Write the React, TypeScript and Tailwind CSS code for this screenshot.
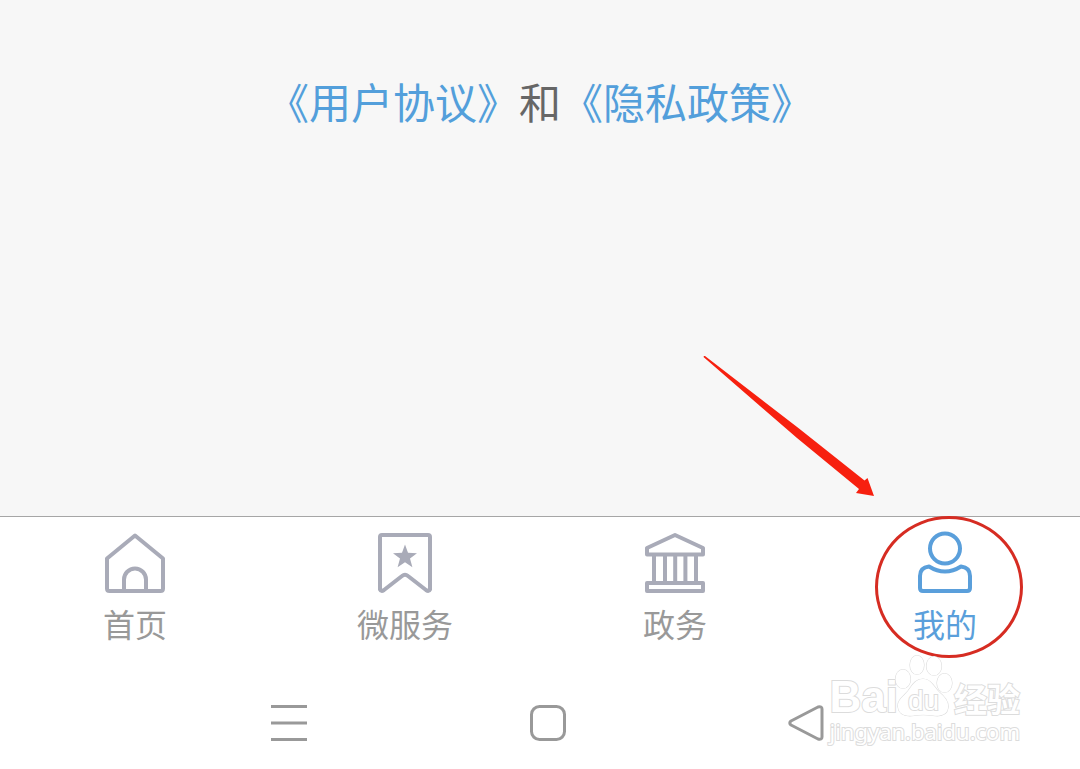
import type { ReactNode } from 'react';

const HomeIcon = () => (
  <svg className="w-15 h-15 overflow-visible" viewBox="0 0 60 60" fill="none" stroke="currentColor" strokeWidth="4" strokeLinejoin="round" aria-hidden="true">
    <path d="M30 2.5 L58 25.5 V55.5 Q58 58 55.5 58 H4.500 Q2 58 2 55.5 V25.500 Z" />
    <path d="M19 58 V46.500 A11 11 0 0 1 41 46.500 V58" />
  </svg>
);

const ServiceIcon = () => (
  <svg className="w-15 h-15 overflow-visible" viewBox="0 0 60 60" fill="none" stroke="currentColor" strokeWidth="4" strokeLinejoin="round" aria-hidden="true">
    <path d="M7 2 H53 Q55 2 55 4 V56.5 Q54 59 51 57 L33 43 Q30 40.5 27 43 L9 57 Q6 59 5 56.5 V4 Q5 2 7 2 Z" />
    <path d="M30 11.5 L33 19.8 L42 20.2 L35 25.6 L37.4 34.2 L30 29.3 L22.6 34.2 L25 25.6 L18 20.2 L27 19.8 Z" fill="currentColor" stroke="none" />
  </svg>
);

const GovIcon = () => (
  <svg className="w-15 h-15 overflow-visible" viewBox="0 0 60 60" fill="none" stroke="currentColor" strokeWidth="4" strokeLinejoin="round" aria-hidden="true">
    <path d="M30 2 L58 15 V21.5 H2 V15 Z" />
    <path d="M9 22 V49 M20 22 V49 M30.2 22 V49 M40.4 22 V49 M51 22 V49" />
    <path d="M2 50 H58 V58 H2 Z" />
  </svg>
);

const MineIcon = () => (
  <svg className="w-15 h-15 overflow-visible" viewBox="0 0 60 60" fill="none" stroke="currentColor" strokeWidth="4" strokeLinejoin="round" aria-hidden="true">
    <circle cx="30" cy="15.5" r="15" />
    <path d="M14 33.5 Q30 43.5 46 33.5 Q55 34.5 55 43 V55 Q55 58 52 58 H8 Q5 58 5 55 V43 Q5 34.5 14 33.5 Z" />
  </svg>
);

const tabs: { label: string; icon: ReactNode; active?: boolean }[] = [
  { label: '首页', icon: <HomeIcon /> },
  { label: '微服务', icon: <ServiceIcon /> },
  { label: '政务', icon: <GovIcon /> },
  { label: '我的', icon: <MineIcon />, active: true },
];

const TabBar = () => (
  <nav className="grid grid-cols-4 bg-white border-t border-[#a6a6a6]">
    {tabs.map((tab) => (
      <button
        key={tab.label}
        className={`relative flex flex-col items-center gap-2 pt-4 pb-9 ${tab.active ? 'text-[#5a9fdb]' : 'text-[#a9abb8]'}`}
      >
        {tab.icon}
        <span className={`text-[32px] leading-11 ${tab.active ? 'text-[#5a9fdb]' : 'text-[#999999]'}`}>{tab.label}</span>
        {/* Highlight ring around the active tab */}
        {tab.active && (
          <span className="absolute -top-px left-1/2 -translate-x-[70px] w-[148px] h-[142px] rounded-[50%] border-3 border-[#d62c22]" />
        )}
      </button>
    ))}
  </nav>
);

const Watermark = () => (
  <div className="absolute right-15 bottom-6 flex flex-col text-white font-['Liberation_Sans','Noto_Sans_CJK_SC',sans-serif] [-webkit-text-stroke:2px_#dcdcdc] [paint-order:stroke_fill] pointer-events-none">
    <div className="flex items-end h-16">
      <span className="text-[44px] leading-10 font-bold">Bai</span>
      <div className="relative -ml-1 w-15 h-16">
        <svg className="w-15 h-16" viewBox="0 0 60 64" fill="#ffffff" stroke="#dcdcdc" strokeWidth="1.2" aria-hidden="true">
          <ellipse cx="9" cy="26" rx="7.5" ry="9.5" />
          <ellipse cx="23" cy="12" rx="7" ry="9.5" />
          <ellipse cx="40" cy="13" rx="7.5" ry="9.5" />
          <ellipse cx="50.5" cy="30" rx="7.5" ry="9.5" />
          <path d="M29 26 C37 26 40 34 45 39 C51 44 55 49 54 55 C53 62 46 63.500 39 62.500 C32 61.500 26 61.500 20 62.500 C12 63.500 5 62 4 54 C3 47 10 43 14 38 C18 33 21 26 29 26 Z" />
        </svg>
        <span className="absolute left-3.5 bottom-0 text-[28px] leading-8">du</span>
      </div>
      <span className="text-[33px] leading-8 font-bold">经验</span>
    </div>
    <span className="text-[22px] leading-7 font-['Noto_Sans',sans-serif]">jingyan.baidu.com</span>
  </div>
);

const SystemBar = () => (
  <div className="relative grid grid-cols-3 items-center justify-items-center h-[88px] pl-40 pr-36 pb-1 bg-white text-[#999999]">
    <button aria-label="菜单">
      <svg className="w-10 h-10" viewBox="0 0 40 40" fill="none" stroke="currentColor" strokeWidth="3.2" aria-hidden="true">
        <path d="M2 3.5 H38 M2 20 H38 M2 36.5 H38" />
      </svg>
    </button>
    <button aria-label="主屏幕">
      <svg className="w-10 h-10" viewBox="0 0 40 40" fill="none" stroke="currentColor" strokeWidth="3" aria-hidden="true">
        <rect x="3.5" y="3.5" width="33" height="33" rx="8" />
      </svg>
    </button>
    <button aria-label="返回">
      <svg className="w-10 h-10" viewBox="0 0 40 40" fill="none" stroke="currentColor" strokeWidth="3" strokeLinejoin="round" aria-hidden="true">
        <path d="M4 18 L31 4 Q35 3 35 6 V34 Q35 37 31 36 L4 22 Q1.5 20 4 18 Z" />
      </svg>
    </button>
    <Watermark />
  </div>
);

export default function App() {
  return (
    <div className="min-h-screen flex flex-col bg-[#f7f7f7] font-['Noto_Sans_CJK_SC',sans-serif]">
      <main className="relative flex-1 pt-[71px]">
        <p className="text-center text-[42px] leading-15 text-[#666666]">
          <a href="#agreement" className="text-[#539fdb]">《用户协议》</a>
          和
          <a href="#privacy" className="text-[#539fdb]">《隐私政策》</a>
        </p>
        <svg className="absolute right-[205px] bottom-5 w-[172px] h-[141px]" viewBox="0 0 172 141" fill="#f7200f" aria-hidden="true">
          <path d="M1 1 L2 1 L96 73.5 L161.5 125.5 L164.5 123 L171 141 L153 138 L156 134 L94 83 L0.5 2 Z" />
        </svg>
      </main>
      <TabBar />
      <SystemBar />
    </div>
  );
}
